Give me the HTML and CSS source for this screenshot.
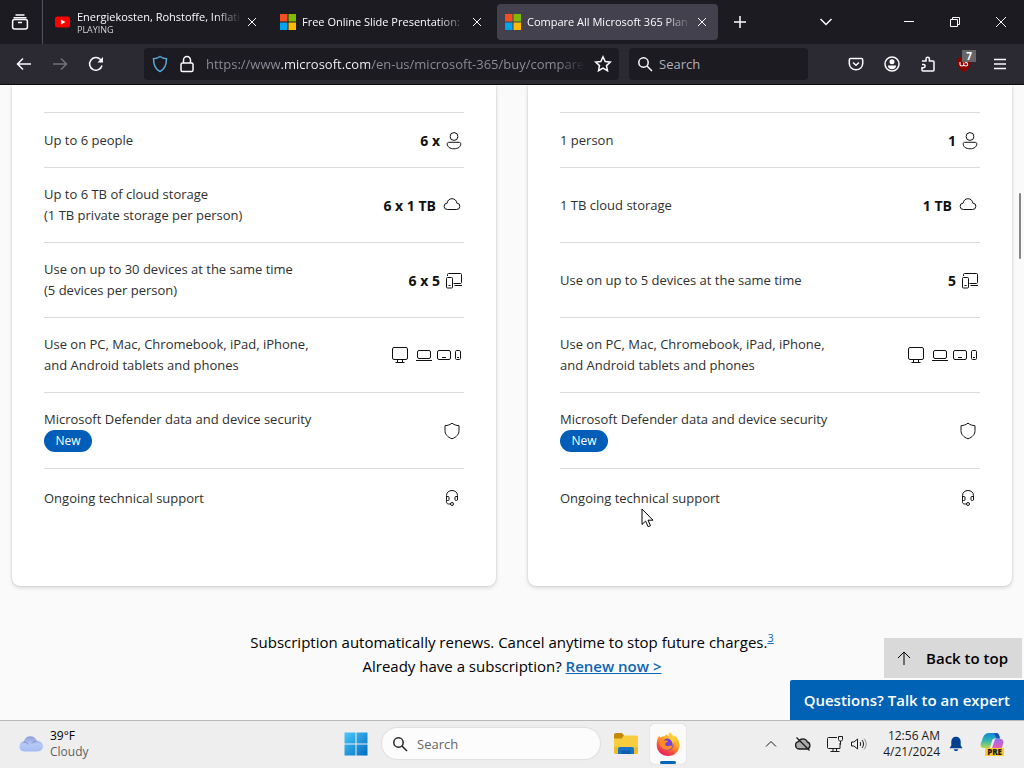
FILE: index.html
```html
<!DOCTYPE html>
<html lang="en">
<head>
<meta charset="utf-8">
<title>Compare All Microsoft 365 Plans</title>
<link rel="stylesheet" href="styles.css">
</head>
<body>
<svg class="symbols" aria-hidden="true">
  <symbol id="close" viewBox="0 0 16 16"><path d="M4 4l8 8M12 4l-8 8"/></symbol>
  <symbol id="search" viewBox="0 0 16 16"><circle cx="6.5" cy="6.5" r="4.7"/><path d="M10 10l5 5"/></symbol>
  <symbol id="ms" viewBox="0 0 16 16"><path fill="#f25022" d="M0 0h7.5v7.5H0z"/><path fill="#7fba00" d="M8.5 0H16v7.5H8.500z"/><path fill="#00a4ef" d="M0 8.500h7.500V16H0z"/><path fill="#ffb900" d="M8.500 8.500H16V16H8.500z"/></symbol>
  <symbol id="person" viewBox="0 0 20 20"><circle cx="10" cy="6.500" r="3.900"/><path d="M4.800 12.300h10.400c1 0 1.600.7 1.600 1.600 0 2.800-2.700 4.900-6.800 4.900s-6.800-2.100-6.800-4.900c0-.9.600-1.600 1.600-1.600z"/></symbol>
  <symbol id="cloud" viewBox="0 0 24 24"><path d="M7.500 16.500a3.200 3.200 0 0 1-.3-6.400C7.400 7.500 9.400 5.700 12 5.700s4.600 1.800 4.800 4.400a3.200 3.200 0 0 1-.3 6.400z"/></symbol>
  <symbol id="devices" viewBox="0 0 20 20"><path d="M3.500 6V4.500c0-.6.400-1 1-1h12c.6 0 1 .4 1 1v8c0 .6-.4 1-1 1H9.500M10.500 15.500H18"/><rect x="2.500" y="7.500" width="6" height="10.500" rx="1"/><path d="M4.500 15.500h2"/></symbol>
  <symbol id="platforms" viewBox="0 0 72 20"><rect x=".5" y="2.500" width="15" height="12" rx="1.500"/><path d="M5.500 14.500V17M10.500 14.500V17M3.500 17.500h9"/><rect x="25.500" y="5.500" width="13" height="8" rx="1.500"/><path d="M24 15.500h16"/><rect x="45.500" y="5.500" width="13" height="9" rx="1.500"/><path d="M50 12.500h4"/><rect x="63.500" y="5.500" width="5" height="9" rx="1.200"/><path d="M65 12.500h2"/></symbol>
  <symbol id="shield" viewBox="0 0 24 24"><path d="M12 4.200c2 1.500 4.300 2.300 7 2.500v4.800c0 3.700-2.300 6.600-7 8.300-4.700-1.700-7-4.600-7-8.300V6.700c2.700-.2 5-1 7-2.500z"/></symbol>
  <symbol id="headset" viewBox="0 0 24 24"><path d="M6.500 11V9.500C6.500 6.400 9 4.500 12 4.500s5.500 1.900 5.500 5V14M6.500 10.500h1.800c.5 0 .7.300.7.700v2.600c0 .4-.2.700-.7.700H7.500c-.6 0-1-.4-1-1zm11 0h-1.800c-.5 0-.7.300-.7.700v2.600c0 .4.200.7.700.7h.8c.6 0 1-.4 1-1zM6.500 13.500v2.300c0 1.400.9 2.200 2.200 2.200h1.800"/><circle cx="12" cy="18" r="1.500"/></symbol>
</svg>

<header class="browser">
  <div class="tabbar">
    <button class="firefox-view" aria-label="Firefox View"><svg class="icon-18" viewBox="0 0 18 18"><path d="M4.500 2h9M2.500 4.800h13"/><rect x="1.600" y="6.500" width="14.800" height="9.500" rx="2"/><path d="M7 9.500h4"/></svg></button>
    <nav class="tabs" aria-label="Tabs">
      <div class="tab">
        <svg class="favicon" viewBox="0 0 16 16"><rect x="0" y="2.500" width="15" height="11" rx="2.500" fill="#f00"/><path d="M6 5.500l4.500 2.500L6 10.500z" fill="#fff"/></svg>
        <div class="tab-label"><span class="tab-title">Energiekosten, Rohstoffe, Inflati</span><span class="tab-status">PLAYING</span></div>
        <button class="tab-close" aria-label="Close tab"><svg class="icon-16"><use href="#close"/></svg></button>
      </div>
      <div class="tab">
        <svg class="favicon"><use href="#ms"/></svg>
        <div class="tab-label"><span class="tab-title">Free Online Slide Presentation:</span></div>
        <button class="tab-close" aria-label="Close tab"><svg class="icon-16"><use href="#close"/></svg></button>
      </div>
      <div class="tab tab-active">
        <svg class="favicon"><use href="#ms"/></svg>
        <div class="tab-label"><span class="tab-title">Compare All Microsoft 365 Plan</span></div>
        <button class="tab-close" aria-label="Close tab"><svg class="icon-16"><use href="#close"/></svg></button>
      </div>
    </nav>
    <button class="new-tab" aria-label="New tab"><svg class="icon-16" viewBox="0 0 16 16"><path d="M8 2v12M2 8h12"/></svg></button>
    <div class="window-tools">
      <button class="list-tabs" aria-label="List all tabs"><svg class="icon-16" viewBox="0 0 16 16"><path d="M2.500 5L8 10.500 13.500 5"/></svg></button>
      <button class="window-button" aria-label="Minimize"><svg class="icon-16 thin" viewBox="0 0 16 16"><path d="M3 7.500h10"/></svg></button>
      <button class="window-button" aria-label="Restore"><svg class="icon-16 thin" viewBox="0 0 16 16"><path d="M3.500 5.500h7v7h-7zM5.500 5.500v-2h7v7h-2"/></svg></button>
      <button class="window-button" aria-label="Close"><svg class="icon-16 thin" viewBox="0 0 16 16"><path d="M3 3l10 10M13 3L3 13"/></svg></button>
    </div>
  </div>
  <div class="toolbar">
    <div class="nav-buttons">
      <button class="tool" aria-label="Back"><svg class="icon-16" viewBox="0 0 16 16"><path d="M15 8H1.500M7 2.500L1.500 8 7 13.500"/></svg></button>
      <button class="tool tool-disabled" aria-label="Forward" disabled><svg class="icon-16" viewBox="0 0 16 16"><path d="M1 8h13.500M9 2.500L14.500 8 9 13.500"/></svg></button>
      <button class="tool" aria-label="Reload"><svg class="icon-16" viewBox="0 0 16 16"><path d="M14 9.500A6.300 6.300 0 1 1 12.500 3.600L14 5"/><path d="M15 1v5.500H9.500z" fill="currentColor" stroke="none"/></svg></button>
    </div>
    <div class="urlbar">
      <svg class="icon-18 tracking" viewBox="0 0 18 18"><path d="M9 1.500c2 1.400 4.300 2.100 6.500 2.300 0 6-1 10.200-6.500 12.700C3.500 14 2.500 9.800 2.500 3.800 4.700 3.600 7 2.900 9 1.500z"/></svg>
      <svg class="icon-18" viewBox="0 0 18 18"><rect x="3" y="8" width="12" height="8.500" rx="1.500"/><path d="M5.500 8V5a3.500 3.500 0 0 1 7 0v3"/></svg>
      <input class="url" type="text" aria-label="Address" value="https://www.microsoft.com/en-us/microsoft-365/buy/compare">
      <svg class="icon-18" viewBox="0 0 18 18"><path d="M9 1.800l2.200 4.700 5.100.6-3.800 3.500 1 5.100L9 13.200l-4.500 2.500 1-5.100L1.700 7.100l5.100-.6z"/></svg>
    </div>
    <label class="searchbar"><svg class="icon-16"><use href="#search"/></svg><input class="search-input" type="search" placeholder="Search" aria-label="Search the web"></label>
    <div class="extensions">
      <button class="tool" aria-label="Save to Pocket"><svg class="icon-16" viewBox="0 0 16 16"><path d="M2.500 2.500h11c.7 0 1.200.5 1.200 1.200v3.800a6.700 6.300 0 0 1-13.400 0V3.700c0-.7.500-1.200 1.200-1.200zM5 6.500l3 2.800 3-2.800"/></svg></button>
      <button class="tool" aria-label="Account"><svg class="icon-16" viewBox="0 0 16 16"><circle cx="8" cy="8" r="7"/><circle cx="8" cy="5.800" r="2.500" fill="currentColor" stroke="none"/><path d="M3.800 9.500h8.400c0 2.200-2 3.700-4.200 3.700S3.800 11.700 3.800 9.500z" fill="currentColor" stroke="none"/></svg></button>
      <button class="tool" aria-label="Extensions"><svg class="icon-16" viewBox="0 0 16 16"><path d="M2 5h4V3a1.700 1.700 0 0 1 3.400 0v2H13c.6 0 1 .4 1 1v8c0 .6-.4 1-1 1H3c-.6 0-1-.4-1-1v-2.300h1.500a1.600 1.600 0 0 0 0-3.300H2"/></svg></button>
      <button class="tool ublock" aria-label="uBlock Origin, 7 blocked"><svg class="icon-16" viewBox="0 0 16 16"><path d="M8 0c2 1.300 4.500 2 7 2 0 7-1.500 11-7 14C2.500 13 1 9 1 2c2.500 0 5-.7 7-2z" fill="#8c0000" stroke="none"/><path d="M4 6v2.500c0 2 3.800 2 3.800 0V6.500M7.800 8.500c0 2 3.900 2 3.900-.3 0-1.500-1.500-2-2.500-1" stroke-width="1.100"/></svg><span class="badge">7</span></button>
      <button class="tool" aria-label="Menu"><svg class="icon-16" viewBox="0 0 16 16"><path d="M2 3.500h12M2 8h12M2 12.500h12"/></svg></button>
    </div>
  </div>
</header>

<main class="page">
  <div class="cards">
    <section class="card" aria-label="Family plan">
      <ul class="features">
        <li class="feature"><span>Up to 6 people</span><span class="value"><b>6 x</b><svg class="icon-20"><use href="#person"/></svg></span></li>
        <li class="feature feature-tall"><span>Up to 6 TB of cloud storage<br>(1 TB private storage per person)</span><span class="value"><b>6 x 1 TB</b><svg class="icon-24"><use href="#cloud"/></svg></span></li>
        <li class="feature feature-tall"><span>Use on up to 30 devices at the same time<br>(5 devices per person)</span><span class="value"><b>6 x 5</b><svg class="icon-20"><use href="#devices"/></svg></span></li>
        <li class="feature feature-tall"><span>Use on PC, Mac, Chromebook, iPad, iPhone,<br>and Android tablets and phones</span><span class="value"><svg class="icon-wide"><use href="#platforms"/></svg></span></li>
        <li class="feature"><span>Microsoft Defender data and device security<span class="new">New</span></span><span class="value"><svg class="icon-24"><use href="#shield"/></svg></span></li>
        <li class="feature feature-last"><span>Ongoing technical support</span><span class="value"><svg class="icon-24"><use href="#headset"/></svg></span></li>
      </ul>
    </section>
    <section class="card" aria-label="Personal plan">
      <ul class="features">
        <li class="feature"><span>1 person</span><span class="value"><b>1</b><svg class="icon-20"><use href="#person"/></svg></span></li>
        <li class="feature feature-tall"><span>1 TB cloud storage</span><span class="value"><b>1 TB</b><svg class="icon-24"><use href="#cloud"/></svg></span></li>
        <li class="feature feature-tall"><span>Use on up to 5 devices at the same time</span><span class="value"><b>5</b><svg class="icon-20"><use href="#devices"/></svg></span></li>
        <li class="feature feature-tall"><span>Use on PC, Mac, Chromebook, iPad, iPhone,<br>and Android tablets and phones</span><span class="value"><svg class="icon-wide"><use href="#platforms"/></svg></span></li>
        <li class="feature"><span>Microsoft Defender data and device security<span class="new">New</span></span><span class="value"><svg class="icon-24"><use href="#shield"/></svg></span></li>
        <li class="feature feature-last"><span>Ongoing technical support</span><span class="value"><svg class="icon-24"><use href="#headset"/></svg></span></li>
      </ul>
    </section>
  </div>
  <p class="renewal">Subscription automatically renews. Cancel anytime to stop future charges.<sup><a href="#note-3">3</a></sup><br>Already have a subscription? <a class="renew" href="#renew">Renew now &gt;</a></p>
  <div class="floating">
    <a class="to-top" href="#top"><svg class="icon-16" viewBox="0 0 16 16"><path d="M8 15V2M2 8l6-6 6 6"/></svg>Back to top</a>
    <button class="expert">Questions? Talk to an expert</button>
  </div>
  <div class="scroll-thumb"></div>
</main>

<footer class="taskbar">
  <button class="weather">
    <svg class="weather-icon" viewBox="0 0 26 18"><defs><linearGradient id="sky" x2="0" y2="1"><stop stop-color="#8f9fd8"/><stop offset=".55" stop-color="#b5c9f5"/><stop offset="1" stop-color="#a2bdf4"/></linearGradient></defs><path d="M6 16.500a5 5 0 0 1-.4-9.900C7 3 9.300 1.200 12.200 1.200c3.300 0 5.600 1.700 6.600 4.600 3.400 0 6.200 2.300 6.200 5.500 0 3-2.400 5.200-5.500 5.200z" fill="url(#sky)"/><path d="M5.500 7c2.500-.2 4 .8 5 2.500M18.500 6c-2 .1-3.500 1-4.500 2.300" fill="none" stroke="#808fce"/></svg>
    <span class="weather-text"><span>39°F</span><span class="muted">Cloudy</span></span>
  </button>
  <div class="apps">
    <button class="app" aria-label="Start"><svg class="icon-24" viewBox="0 0 24 24"><defs><linearGradient id="win" x2="1" y2="1"><stop stop-color="#4cc8fa"/><stop offset="1" stop-color="#006cc0"/></linearGradient></defs><path fill="url(#win)" d="M.5.500h11v11H.5zM12.500.500h11v11h-11zM.5 12.500h11v11H.5zM12.500 12.500h11v11h-11z"/></svg></button>
    <label class="task-search"><svg class="icon-16"><use href="#search"/></svg><input class="task-input" type="search" placeholder="Search" aria-label="Search Windows"></label>
    <button class="app" aria-label="File Explorer"><svg class="icon-24" viewBox="0 0 24 24"><path fill="#c48a06" d="M0 3a2 2 0 0 1 2-2h6l2 2.500L8 7H0z"/><path fill="#f7cd3d" d="M0 6.500h8l2.500-3H22a2 2 0 0 1 2 2V20a2 2 0 0 1-2 2H2a2 2 0 0 1-2-2z"/><path fill="#eebc28" d="M0 15h24v5a2 2 0 0 1-2 2H2a2 2 0 0 1-2-2z"/><path fill="#1474c9" d="M4 17a2 2 0 0 1 2-2h12a2 2 0 0 1 2 2v5H4z"/><path fill="#0f5ca8" d="M7.500 18.500h9V22h-9z"/></svg></button>
    <button class="app app-active" aria-label="Firefox"><svg class="icon-24" viewBox="0 0 24 24"><defs><linearGradient id="fox" x1=".8" x2=".25" y2="1"><stop stop-color="#ffe845"/><stop offset=".45" stop-color="#ff9b24"/><stop offset=".75" stop-color="#f8483f"/><stop offset="1" stop-color="#dc1670"/></linearGradient></defs><path fill="url(#fox)" d="M2 6c.2-1 .8-2 1.500-2.600.1 1 .5 1.500 1.200 2C6 4.200 7.200 4 8.500 4.200c.9-1.300 1.600-1.700 2.600-2 .1 1 .7 1.400 1.500 1.700C12 2 13.500.8 15 .2c.2 2 2 3 3.200 4.500.5-.1.600-.7.400-1.500C21 5.500 23.500 8.500 23.500 13c0 6.200-5 11-11.300 11S.700 19.500.7 13c0-2.500.3-5 1.300-7z"/><circle cx="11.700" cy="12.500" r="6" fill="#7440d2"/><path fill="#ff8b28" d="M3.500 8c2-.9 4-.4 5.500.7 1-.3 2.300-.2 3.200.3-1 1.700-2.600 1.500-3 2.800-.3 1.200.5 2 1.800 2.300 2 .4 3-.9 4.500-.4 1 .3 1.200 1.200.5 2-1.200 1.500-3.600 2.400-6 2-4.500-.7-6.900-5-6.500-9.700z"/><path fill="#ffca35" d="M13 3.500c4 .8 6.500 3.500 6.700 7.500-.7-1-1.500-1.700-2.500-2 .7 2.300.4 4-.5 5.500.4-3.700-1-6-3.300-7.500-1.200-1-1.200-2.200-.4-3.500z"/></svg></button>
  </div>
  <div class="tray">
    <button class="tray-button" aria-label="Show hidden icons"><svg class="icon-16" viewBox="0 0 16 16"><path d="M3 10.500l5-5 5 5"/></svg></button>
    <button class="tray-button" aria-label="OneDrive"><svg class="icon-18" viewBox="0 0 18 18"><path d="M5 14a3.700 3.700 0 0 1-.5-7.300C5.300 4.800 7 3.800 9 3.800s3.700 1.200 4.300 3.200a3.600 3.600 0 0 1-.3 7z" fill="#aaa" stroke-width="1.300"/><path d="M2.500 2.500l13 13" stroke-width="1.300"/></svg></button>
    <button class="status" aria-label="Network and volume"><svg class="icon-18" viewBox="0 0 18 18"><path d="M11 2.500H2.500c-.6 0-1 .4-1 1v9c0 .6.400 1 1 1H14V8M7 13.500V16M10.500 13.500V16M4.500 16.500h9M14.500 6v3.500H14M12.500 1.500h4v3c0 1-.7 1.500-2 1.500s-2-.5-2-1.500z"/></svg><svg class="icon-18" viewBox="0 0 18 18"><path d="M1.500 7v4H4l3.500 3V4L4 7zM10 7c.9 1.200.9 2.800 0 4M12 5c2 2.300 2 5.700 0 8"/><path d="M14 3.500c2.800 3 2.800 8 0 11" stroke="#888"/></svg></button>
    <button class="clock"><span>12:56 AM</span><span>4/21/2024</span></button>
    <button class="tray-button" aria-label="Notifications"><svg class="icon-16" viewBox="0 0 16 16"><path d="M8 .8c3 0 4.700 2 4.700 5v3.700l1.800 2.800h-13l1.800-2.800V5.800c0-3 1.700-5 4.700-5zM5.700 13.200h4.600c-.4 1.300-1.200 1.900-2.300 1.900s-1.900-.6-2.300-1.900z" fill="#003e92" stroke="none"/></svg></button>
    <button class="copilot" aria-label="Copilot preview"><svg class="icon-24" viewBox="0 0 24 24"><defs><linearGradient id="cp1" x2="0" y2="1"><stop stop-color="#1484d8"/><stop offset=".5" stop-color="#30b5b1"/><stop offset="1" stop-color="#b7d84e"/></linearGradient><linearGradient id="cp2" x2="0" y2="1"><stop stop-color="#9b6df0"/><stop offset=".6" stop-color="#e85fb0"/><stop offset="1" stop-color="#f7894c"/></linearGradient></defs><path fill="url(#cp1)" d="M9 1h7c2 0 2.800 1 3.300 3l.7 2.500h-5c-1.800 0-2.600 1-3.100 2.800L10 16H4c-2.500 0-4-1.500-3.200-4.500L3 5.500C4.200 2.500 6 1 9 1z"/><path fill="url(#cp2)" d="M15 7h5c2.800 0 4 1.800 3.200 4.500L21.500 17c-1 3.500-3 5-6 5H9c-1.500 0-2.200-.8-2.700-2.300L6 17h4c1.300 0 2-.7 2.400-2z"/><path fill="#1450bf" d="M14 1h2c2 0 2.800 1 3.300 3l.7 2.500h-3.500z"/></svg><span class="pre">PRE</span></button>
  </div>
</footer>

<svg class="pointer" viewBox="0 0 13 20" aria-hidden="true"><path d="M1 1v15.500l3.600-3.400 2.500 5.600 2.400-1-2.500-5.500H12z" fill="#fff" stroke="#000"/></svg>
</body>
</html>
```
FILE: styles.css
```css
* { box-sizing: border-box; }
body {
  margin: 0;
  height: 100vh;
  display: flex;
  flex-direction: column;
  overflow: hidden;
  font-family: "Open Sans", "Noto Sans", sans-serif;
  font-size: 13px;
  color: #000;
  background: #fafafa;
}
button, input { font: inherit; color: inherit; border: 0; background: none; padding: 0; margin: 0; }
svg { fill: none; stroke: currentColor; flex: none; display: block; }
button { display: flex; align-items: center; justify-content: center; }
.symbols { position: absolute; width: 0; height: 0; }
.icon-16 { width: 16px; height: 16px; }
.icon-18 { width: 18px; height: 18px; }
.icon-20 { width: 20px; height: 20px; }
.icon-24 { width: 24px; height: 24px; }
.icon-wide { width: 72px; height: 20px; }

/* Browser chrome */
.browser { color: #fbfbfe; background: #2b2a33; border-bottom: 1px solid #0c0c0d; }
.browser svg { stroke-width: 1.5; }
.browser svg.thin { stroke-width: 1; }
.tabbar { display: flex; height: 44px; background: #1c1b22; }
.firefox-view { width: 43px; padding-right: 2px; border-right: 1px solid #52525e; }
.tabs { display: flex; gap: 4px; flex: 0 1 675px; min-width: 0; padding: 4px 0 4px 4px; }
.tab { display: flex; align-items: center; flex: 1; min-width: 0; padding: 0 6px 0 8px; border-radius: 4px; }
.tab-active { background: #42414d; }
.tab .favicon { width: 16px; height: 16px; margin-right: 6px; stroke: none; }
.tab-label {
  flex: 1; min-width: 0; overflow: hidden; white-space: nowrap;
  font-size: 11px; line-height: 16px;
  mask-image: linear-gradient(to left, transparent, #000 28px);
}
.tab-title, .tab-status { display: block; }
.tab-status { font-size: 9px; line-height: 10px; color: #d0d0d5; }
.tab-close { width: 20px; height: 20px; }
.browser .tab-close svg { stroke-width: 1; }
.new-tab { width: 36px; margin-left: 4px; }
.window-tools { display: flex; margin-left: auto; }
.list-tabs { width: 36px; margin-right: 42px; }
.window-button { width: 46px; }
.toolbar { display: flex; align-items: center; height: 40px; padding: 0 6px; }
.nav-buttons, .extensions { display: flex; }
.tool { width: 36px; height: 32px; }
.tool-disabled { color: #72717c; }
.urlbar, .searchbar { display: flex; align-items: center; height: 32px; background: #1c1b22; border-radius: 4px; }
.urlbar { flex: 1; min-width: 0; margin-left: 30px; padding: 0 7px; gap: 9px; }
.tracking { color: #5aa7d8; }
.url {
  flex: 1; min-width: 0; margin-left: 1px; font-size: 13px;
  color: transparent;
  caret-color: #fbfbfe;
  background: linear-gradient(to right, #8f8f9a 75px, #fbfbfe 75px 164px, #8f8f9a 164px calc(100% - 28px), transparent);
  background-clip: text;
}
.searchbar { width: 179px; margin-left: 10px; padding: 0 8px; gap: 6px; }
.search-input { flex: 1; min-width: 0; }
.search-input::placeholder { color: #b0b0b8; opacity: 1; }
.extensions { margin-left: 30px; }
.ublock { position: relative; }
.badge {
  position: absolute; top: 2px; right: 6px; width: 14px; height: 12px;
  font-size: 10px; font-weight: 700; line-height: 12px; text-align: center;
  color: #fff; background: #666;
}

/* Plans */
.page { position: relative; flex: 1; min-height: 0; overflow: hidden; }
.cards { display: grid; grid-template-columns: 1fr 1fr; gap: 32px; padding: 0 12px; }
.card {
  padding: 27px 32px 59px;
  background: #fff;
  border-radius: 0 0 8px 8px;
  box-shadow: 0 0 2px rgba(0, 0, 0, .2), 0 2px 4px rgba(0, 0, 0, .12);
}
.features { margin: 0; padding: 0; list-style: none; border-top: 1px solid #d9d9d9; }
.feature {
  display: flex; align-items: center; justify-content: space-between;
  min-height: 55px; padding: 16px 0;
  line-height: 21px; color: #2f2f2f;
  border-bottom: 1px solid #d9d9d9;
}
.feature-tall { min-height: 75px; }
.feature-last { min-height: 58px; border-bottom: 0; }
.value { display: flex; align-items: center; gap: 4px; font-size: 14px; color: #111; }
.new {
  display: block; width: 48px; height: 22px; border-radius: 11px;
  font-size: 12px; line-height: 22px; text-align: center;
  color: #fff; background: #005db8;
}
.renewal { margin: 44px 0 0; font-size: 15px; line-height: 24px; text-align: center; }
.renewal a { color: #0d65b5; }
.renewal sup { font-size: 11px; line-height: 0; }
.renew { font-weight: 600; }
.floating { position: absolute; right: 0; bottom: 0; display: flex; flex-direction: column; align-items: flex-end; gap: 2px; }
.to-top {
  display: flex; align-items: center; gap: 14px; height: 40px; margin-right: 2px; padding: 0 14px 0 12px;
  font-size: 15px; font-weight: 600; color: #000; text-decoration: none; background: #d9d9d9;
}
.expert { height: 40px; padding: 0 14px; font-size: 15px; font-weight: 600; color: #fff; background: #0062b5; border-radius: 2px 0 0 0; }
.scroll-thumb { position: absolute; top: 108px; right: 3px; width: 2px; height: 66px; background: #858585; border-radius: 1px; }

/* Taskbar */
.taskbar {
  display: grid; grid-template-columns: 1fr auto 1fr; align-items: center;
  height: 48px; padding-bottom: 2px; border-top: 1px solid #b9b9b9; background: #eee;
}
.weather { justify-self: start; gap: 6px; margin-left: 18px; }
.weather-icon { width: 26px; height: 18px; stroke: none; }
.weather-text { display: grid; text-align: left; font-size: 12px; line-height: 16px; }
.muted { color: #5f5f5f; }
.apps { display: flex; align-items: center; }
.app { position: relative; width: 36px; height: 40px; border-radius: 4px; }
.app svg { stroke: none; }
.task-search {
  display: flex; align-items: center; gap: 9px; width: 218px; height: 31px; margin: 0 8px; padding: 0 10px;
  color: #222; background: #fcfcfc; border-radius: 16px; box-shadow: 0 0 1px 1px #dedede;
}
.task-search svg { stroke-width: 1.5; }
.task-input { flex: 1; min-width: 0; font-size: 13px; }
.task-input::placeholder { color: #666; opacity: 1; }
.app-active { margin-left: 6px; background: #fafafa; box-shadow: 0 0 1px #aaa; }
.app-active::after { content: ""; position: absolute; bottom: 0; left: 10px; width: 16px; height: 3px; border-radius: 2px; background: #0067b8; }
.tray { display: flex; align-items: center; justify-content: flex-end; padding-right: 20px; color: #1b1b1b; }
.tray-button { width: 32px; height: 32px; }
.status { gap: 6px; margin-left: 7px; }
.clock { display: grid; margin-left: 15px; font-size: 12px; line-height: 16px; text-align: right; white-space: nowrap; }
.copilot { position: relative; margin-left: 8px; }
.copilot svg { stroke: none; }
.pre {
  position: absolute; bottom: 0; right: 0; padding: 0 2px;
  font-size: 8px; font-weight: 800; line-height: 8px; background: #ffc92e; border-radius: 1px;
}
.pointer { position: absolute; left: 641px; top: 508px; width: 13px; height: 20px; }
```
